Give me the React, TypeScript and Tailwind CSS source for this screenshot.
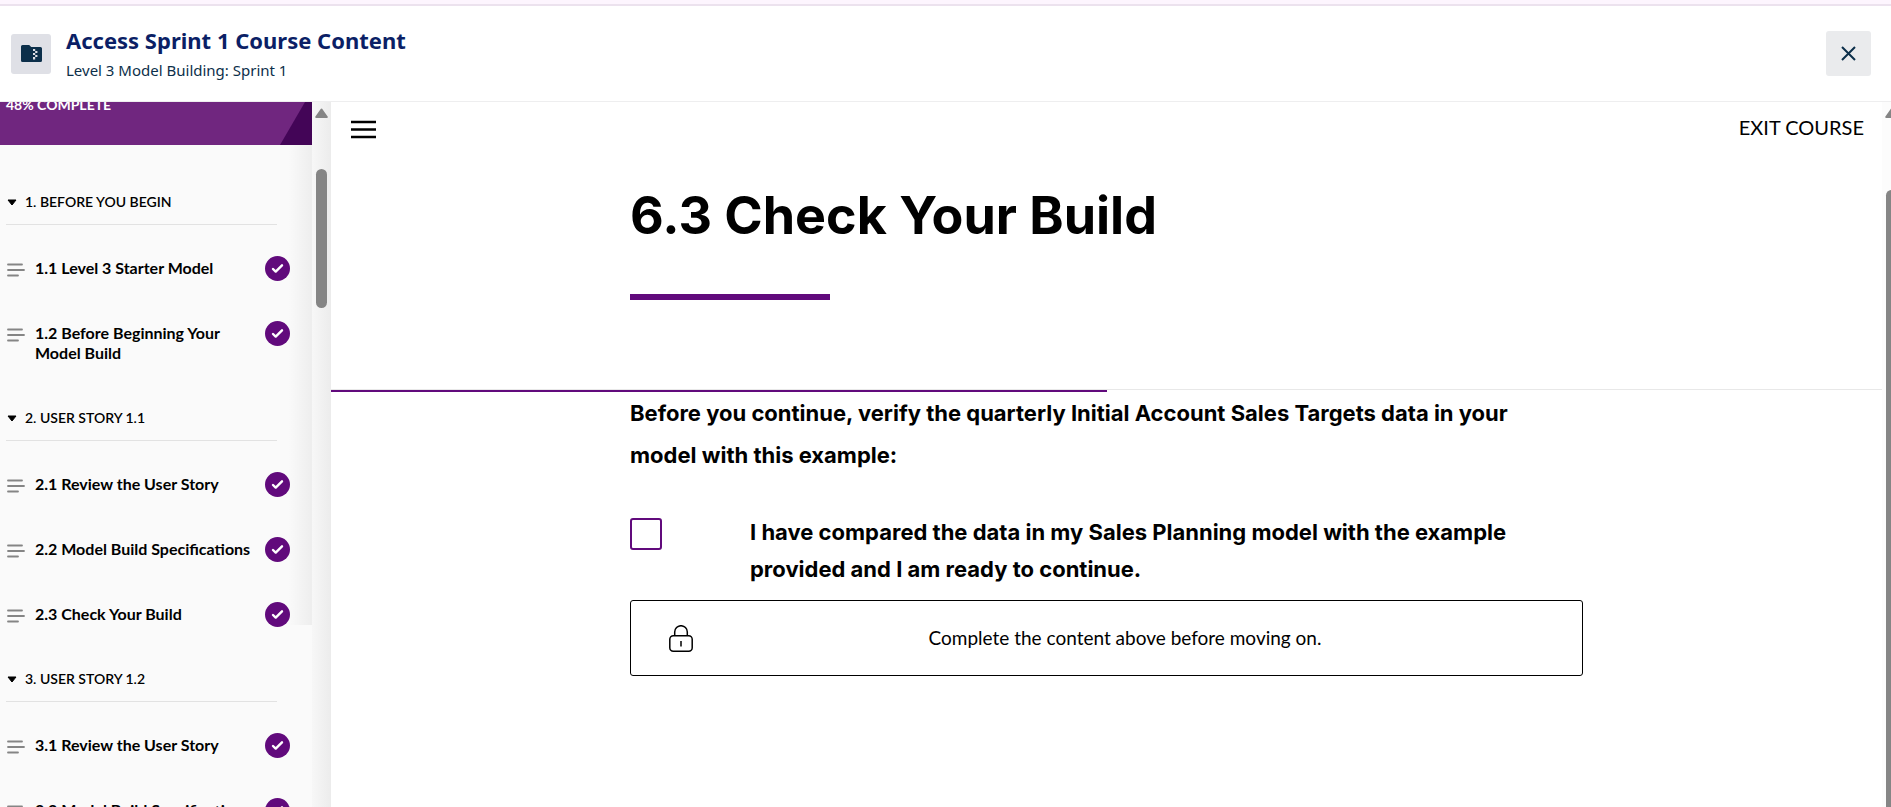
const sections = [
  {
    title: "1. BEFORE YOU BEGIN",
    lessons: ["1.1 Level 3 Starter Model", "1.2 Before Beginning Your Model Build"],
  },
  {
    title: "2. USER STORY 1.1",
    lessons: ["2.1 Review the User Story", "2.2 Model Build Specifications", "2.3 Check Your Build"],
  },
  {
    title: "3. USER STORY 1.2",
    lessons: ["3.1 Review the User Story", "3.2 Model Build Specifications", "3.3 Check Your Build"],
  },
];

function ZipFolderIcon() {
  return (
    <svg viewBox="0 0 21 17" className="h-[17px] w-[21px]" aria-hidden="true">
      <path
        d="M1.5 0h6.7l2 2h9.3A1.5 1.5 0 0 1 21 3.5v12a1.5 1.5 0 0 1-1.5 1.5h-18A1.5 1.5 0 0 1 0 15.5v-14A1.5 1.5 0 0 1 1.5 0z"
        fill="#0c2f4a"
      />
      <path
        d="M12 4h2.2v2H12zM14.2 6h2.2v2h-2.2zM12 8h2.2v2H12zM14.2 10h2.2v2h-2.2zM12 12h2.2v2.5H12z"
        fill="#dfe0e6"
      />
    </svg>
  );
}

function LessonIcon() {
  return (
    <svg viewBox="0 0 18 14" className="mt-[7px] h-[14px] w-[18px] shrink-0" aria-hidden="true">
      <path d="M1 1.5h14M1 7h16M1 12.5h10" stroke="#858585" strokeWidth={1.8} strokeLinecap="round" />
    </svg>
  );
}

function DoneBadge() {
  return (
    <svg viewBox="0 0 25 25" className="h-[25px] w-[25px] shrink-0" role="img" aria-label="Completed">
      <circle cx="12.5" cy="12.5" r="12.5" fill="#610a7c" />
      <path
        d="M8 13l2.7 2.6L17 9.3"
        fill="none"
        stroke="#fff"
        strokeWidth={2.4}
        strokeLinecap="round"
        strokeLinejoin="round"
      />
    </svg>
  );
}

function LockIcon() {
  return (
    <svg
      viewBox="0 0 24 27"
      className="h-[27px] w-[24px] shrink-0"
      fill="none"
      stroke="#000"
      strokeWidth={1.5}
      aria-hidden="true"
    >
      <rect x="0.8" y="10.7" width="22.4" height="15.5" rx="3.5" />
      <path d="M5.7 10.7V7a6.3 6.3 0 0 1 12.6 0v3.7M12 16v5.5" />
    </svg>
  );
}

function ScrollArrow() {
  return (
    <svg viewBox="0 0 13 10" className="h-[10px] w-[13px] shrink-0" aria-hidden="true">
      <path d="M6.5 1.5L11.8 9H1.2z" fill="#858585" stroke="#858585" strokeWidth={2} strokeLinejoin="round" />
    </svg>
  );
}

function Sidebar() {
  return (
    <aside className="flex w-[331px] shrink-0 overflow-hidden bg-[#fafafa]">
      <div className="relative min-w-0 flex-1">
        <div className="absolute top-0 right-0 h-[523px] w-6 bg-linear-to-r from-transparent to-black/5" />

        <div className="relative flex h-[43px] justify-between overflow-hidden bg-[#70267f]">
          <p className="-mt-2 pl-[6px] text-[14px] leading-[22px] font-bold text-white">48% COMPLETE</p>
          <svg viewBox="0 0 32 43" className="h-[43px] w-8" aria-hidden="true">
            <path d="M25 0H32V43H0z" fill="#430557" />
          </svg>
        </div>

        <nav className="pt-[25px]" aria-label="Course outline">
          {sections.map((section) => (
            <section key={section.title}>
              <h2 className="mr-[35px] ml-[6px] border-b border-[#e2e2e2] pt-[22px] pb-3 text-[14px] leading-5 font-semibold">
                <button type="button" className="flex items-center gap-2">
                  <svg viewBox="0 0 10 7" className="ml-px h-[7px] w-[10px]" aria-hidden="true">
                    <path d="M1 1h8L5 6z" fill="#000" stroke="#000" strokeLinejoin="round" />
                  </svg>
                  {section.title}
                </button>
              </h2>
              <ul className="pt-[11px]">
                {section.lessons.map((lesson) => (
                  <li key={lesson}>
                    <a href="#" className="flex items-start py-5 pr-[22px] pl-[7px]">
                      <LessonIcon />
                      <span className="ml-[10px] flex-1 pt-[2px] pb-[3px] text-[16px] leading-5 font-bold">{lesson}</span>
                      <DoneBadge />
                    </a>
                  </li>
                ))}
              </ul>
            </section>
          ))}
        </nav>
      </div>

      <div className="flex w-[19px] flex-col items-center bg-linear-to-r from-[#f7f7f7] to-[#ececec] pt-[6px]">
        <ScrollArrow />
        <div className="mt-[51px] h-[139px] w-[11px] rounded-full bg-[#858585]" />
      </div>
    </aside>
  );
}

function Lesson() {
  return (
    <main className="min-w-0 flex-1 text-black">
      <header className="border-b border-[#e8e8e8]">
        <div className="flex items-start justify-between pr-[18px] pl-5">
          <button type="button" aria-label="Toggle menu" className="mt-[18px]">
            <svg viewBox="0 0 25 19" className="h-[19px] w-[25px]" aria-hidden="true">
              <path d="M0 2h25M0 9.5h25M0 17h25" stroke="#000" strokeWidth={2.4} />
            </svg>
          </button>
          <a href="#" className="mt-[13px] text-[20px] leading-6">EXIT COURSE</a>
        </div>
        <div className="mx-auto max-w-[953px] pt-[47px] pb-[89px]">
          <h1 className="font-[Inter,sans-serif] text-[52px] leading-[60px] font-bold">6.3 Check Your Build</h1>
          <div className="mt-12 h-[6px] w-[200px] bg-[#610a7c]" />
        </div>
      </header>
      <div className="h-[2px] w-1/2 bg-[#610a7c]" role="progressbar" aria-valuenow={50} aria-label="Lesson progress" />

      <div className="mx-auto max-w-[953px]">
        <p className="font-[Inter,sans-serif] text-[22px] leading-[42px] font-bold">
          Before you continue, verify the quarterly Initial Account Sales Targets data in your
          <br />
          model with this example:
        </p>
        <div className="mt-[38px] flex items-start">
          <input
            id="compared"
            type="checkbox"
            className="mt-1 h-8 w-8 shrink-0 appearance-none rounded-[3px] border-2 border-[#610a7c] bg-white checked:bg-[#610a7c]"
          />
          <label htmlFor="compared" className="ml-[88px] font-[Inter,sans-serif] text-[22px] leading-[37px] font-bold">
            I have compared the data in my Sales Planning model with the example
            <br />
            provided and I am ready to continue.
          </label>
        </div>
        <button
          type="button"
          className="mt-3 flex h-[76px] w-full items-center rounded-[3px] border border-black pr-[25px] pl-[38px]"
        >
          <LockIcon />
          <span className="flex-1 text-[19px] leading-6">Complete the content above before moving on.</span>
        </button>
      </div>
    </main>
  );
}

export default function App() {
  return (
    <div className="flex h-screen flex-col overflow-hidden bg-white font-[Lato,sans-serif] text-black">
      <div className="h-[6px] shrink-0 border-b-2 border-[#ece2ee] bg-[#fdf5fe]" />
      <header className="flex h-24 shrink-0 items-center border-b border-[#eeeeef] pr-5 pl-[11px] font-['Noto_Sans',sans-serif]">
        <div className="flex h-10 w-10 items-center justify-center rounded-[3px] bg-[#dfe0e6]">
          <ZipFolderIcon />
        </div>
        <div className="ml-[15px] flex-1">
          <h1 className="text-[22px] leading-8 font-bold text-[#0b1f66]">Access Sprint 1 Course Content</h1>
          <p className="text-[15px] leading-7 text-[#0c2f4a]">Level 3 Model Building: Sprint 1</p>
        </div>
        <button
          type="button"
          aria-label="Close"
          className="flex h-[45px] w-[45px] items-center justify-center rounded-[3px] bg-[#eaebed]"
        >
          <svg viewBox="0 0 15 15" className="h-[15px] w-[15px]" aria-hidden="true">
            <path d="M1 1l13 13M14 1L1 14" stroke="#0c2f4a" strokeWidth={2} />
          </svg>
        </button>
      </header>

      <div className="flex min-h-0 flex-1">
        <Sidebar />
        <Lesson />
        <div className="flex w-[9px] shrink-0 flex-col items-start overflow-hidden bg-[#fcfcfc] pt-[6px] pl-[3px]">
          <ScrollArrow />
          <div className="mt-[72px] ml-px w-[11px] flex-1 rounded-t-full bg-[#858585]" />
        </div>
      </div>
    </div>
  );
}
